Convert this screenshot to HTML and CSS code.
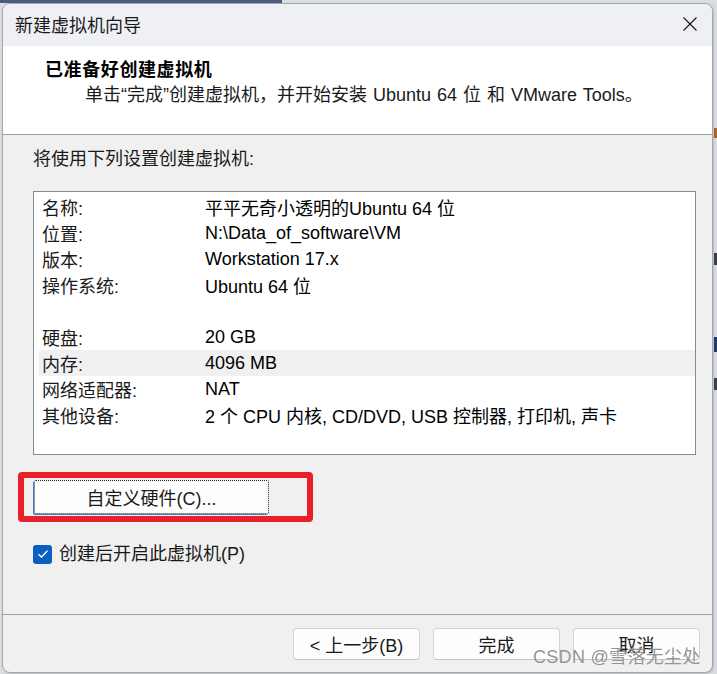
FILE: index.html
```html
<!DOCTYPE html>
<html lang="zh-CN">
<head>
<meta charset="utf-8">
<title>新建虚拟机向导</title>
<link rel="stylesheet" href="styles.css">
</head>
<body>
<div class="window">
  <div class="titlebar">
    <span class="title">新建虚拟机向导</span>
    <span class="close" aria-label="关闭"><svg width="14" height="14" viewBox="0 0 14 14"><path d="M0.5 0.5 L13.5 13.5 M13.5 0.5 L0.5 13.5" stroke="#1a1a1a" stroke-width="1.2" fill="none"/></svg></span>
  </div>
  <div class="header">
    <div class="heading">已准备好创建虚拟机</div>
    <div class="subheading">单击“完成”创建虚拟机，并开始安装 Ubuntu 64 位 和 VMware Tools。</div>
  </div>
  <div class="content">
    <div class="intro">将使用下列设置创建虚拟机:</div>
    <div class="summary">
      <div class="row"><span class="label">名称:</span><span class="value">平平无奇小透明的Ubuntu 64 位</span></div>
      <div class="row"><span class="label">位置:</span><span class="value">N:\Data_of_software\VM</span></div>
      <div class="row"><span class="label">版本:</span><span class="value">Workstation 17.x</span></div>
      <div class="row"><span class="label">操作系统:</span><span class="value">Ubuntu 64 位</span></div>
      <div class="row"></div>
      <div class="row"><span class="label">硬盘:</span><span class="value">20 GB</span></div>
      <div class="row selected"><span class="label">内存:</span><span class="value">4096 MB</span></div>
      <div class="row"><span class="label">网络适配器:</span><span class="value">NAT</span></div>
      <div class="row"><span class="label">其他设备:</span><span class="value">2 个 CPU 内核, CD/DVD, USB 控制器, 打印机, 声卡</span></div>
    </div>
    <div class="hw-wrap">
      <button class="hw-btn">自定义硬件(C)...</button>
      <div class="annot"></div>
    </div>
    <label class="check">
      <span class="box"><svg width="12" height="10" viewBox="0 0 12 10"><path d="M1.5 5.2 L4.5 8 L10.5 1.8" stroke="#ffffff" stroke-width="1.3" fill="none"/></svg></span>
      <span>创建后开启此虚拟机(P)</span>
    </label>
  </div>
  <div class="footer">
    <button class="btn">&lt; 上一步(B)</button>
    <button class="btn">完成</button>
    <button class="btn">取消</button>
  </div>
  <div class="watermark">CSDN @雪落无尘处</div>
</div>
</body>
</html>
```

FILE: styles.css
```css
* { box-sizing: border-box; }

html, body {
  margin: 0;
  padding: 0;
}

body {
  width: 717px;
  height: 674px;
  overflow: hidden;
  font-family: "Liberation Sans", "Noto Sans CJK SC", sans-serif;
  font-size: 18px;
  color: #1a1a1a;
  background:
    linear-gradient(#4a5d7e, #4a5d7e) 0 0 / 282px 3px no-repeat,
    linear-gradient(#b0661f, #b0661f) 714px 128px / 3px 10px no-repeat,
    linear-gradient(#3a3f48, #3a3f48) 714px 253px / 3px 12px no-repeat,
    linear-gradient(#1f3a6b, #1f3a6b) 714px 337px / 3px 15px no-repeat,
    linear-gradient(#3a3f48, #3a3f48) 714px 378px / 3px 12px no-repeat,
    #d9dce1;
  padding: 3px 0 0 2px;
}

.window {
  position: relative;
  width: 711px;
  height: 670px;
  border: 1px solid #a3a6ab;
  border-radius: 8px;
  overflow: hidden;
  background: #f0f0f0;
  display: flex;
  flex-direction: column;
  box-shadow: 1px 1px 2px rgba(0,0,0,0.15);
}

.titlebar {
  height: 42px;
  flex: none;
  background: #eef0f5;
  display: flex;
  justify-content: space-between;
  align-items: flex-start;
  padding-left: 12px;
}

.title {
  margin-top: 8px;
  line-height: 24px;
  font-family: "Noto Sans CJK SC", sans-serif;
  font-size: 18px;
  color: #1a1a1a;
}

.close {
  margin-top: 13px;
  margin-right: 15px;
  width: 14px;
  height: 14px;
  display: block;
}
.close svg { display: block; }

.header {
  height: 89px;
  flex: none;
  background: #ffffff;
  border-bottom: 1px solid #a0a0a0;
  padding-top: 10px;
}

.heading {
  padding-left: 42px;
  line-height: 24px;
  font-family: "Noto Sans CJK SC", sans-serif;
  font-weight: 700;
  font-size: 18px;
  letter-spacing: 0.6px;
  color: #000;
}

.subheading {
  margin-top: 3px;
  padding-left: 82px;
  line-height: 24px;
  word-spacing: 1px;
  color: #1a1a1a;
}

.content {
  flex: 1;
  padding: 12px 0 0 30px;
}

.intro {
  line-height: 24px;
  margin-bottom: 20px;
}

.summary {
  width: 663px;
  height: 264px;
  background: #fff;
  border: 1px solid #858a93;
  padding: 2px 0 0 5px;
}

.row {
  height: 26px;
  display: flex;
  align-items: center;
  padding-left: 3px;
  color: #000;
}

.row.selected {
  background: #f0f0f0;
}

.label {
  width: 163px;
  flex: none;
  color: #1a1a1a;
}

.hw-wrap {
  position: relative;
  margin-top: 25px;
  margin-left: 1px;
  width: 235px;
  height: 34px;
}

.hw-btn {
  display: block;
  width: 235px;
  height: 34px;
  padding: 0;
  font-family: inherit;
  font-size: 18px;
  color: #1a1a1a;
  background: #fdfdfd;
  border: 1px dotted #222;
  border-radius: 2px;
  box-shadow: -1px 1px 0 #3f7fcf;
}

.annot {
  position: absolute;
  left: -16px;
  top: -8px;
  width: 295px;
  height: 50px;
  border: 6px solid #e8202a;
  border-radius: 4px;
  pointer-events: none;
}

.check {
  margin-top: 28px;
  display: flex;
  align-items: center;
  gap: 7px;
  line-height: 24px;
}

.box {
  width: 19px;
  height: 19px;
  border-radius: 3px;
  background: #0a5fc0;
  display: flex;
  align-items: center;
  justify-content: center;
}
.box svg { display: block; }

.footer {
  height: 58px;
  flex: none;
  border-top: 1px solid #a0a0a0;
  display: flex;
  justify-content: flex-end;
  gap: 13px;
  padding: 13px 12px 0 0;
}

.btn {
  width: 127px;
  height: 32px;
  padding: 0;
  font-family: inherit;
  font-size: 18px;
  color: #1a1a1a;
  background: #fdfdfd;
  border: 1px solid #d3d3d3;
  border-bottom-color: #c2c2c2;
  border-radius: 4px;
}

.watermark {
  position: absolute;
  left: 530px;
  top: 641px;
  font-size: 18px;
  line-height: 24px;
  letter-spacing: 0.3px;
  color: rgba(120, 120, 120, 0.8);
  text-shadow: 0 0 1px rgba(255,255,255,0.8);
  white-space: nowrap;
}
```
